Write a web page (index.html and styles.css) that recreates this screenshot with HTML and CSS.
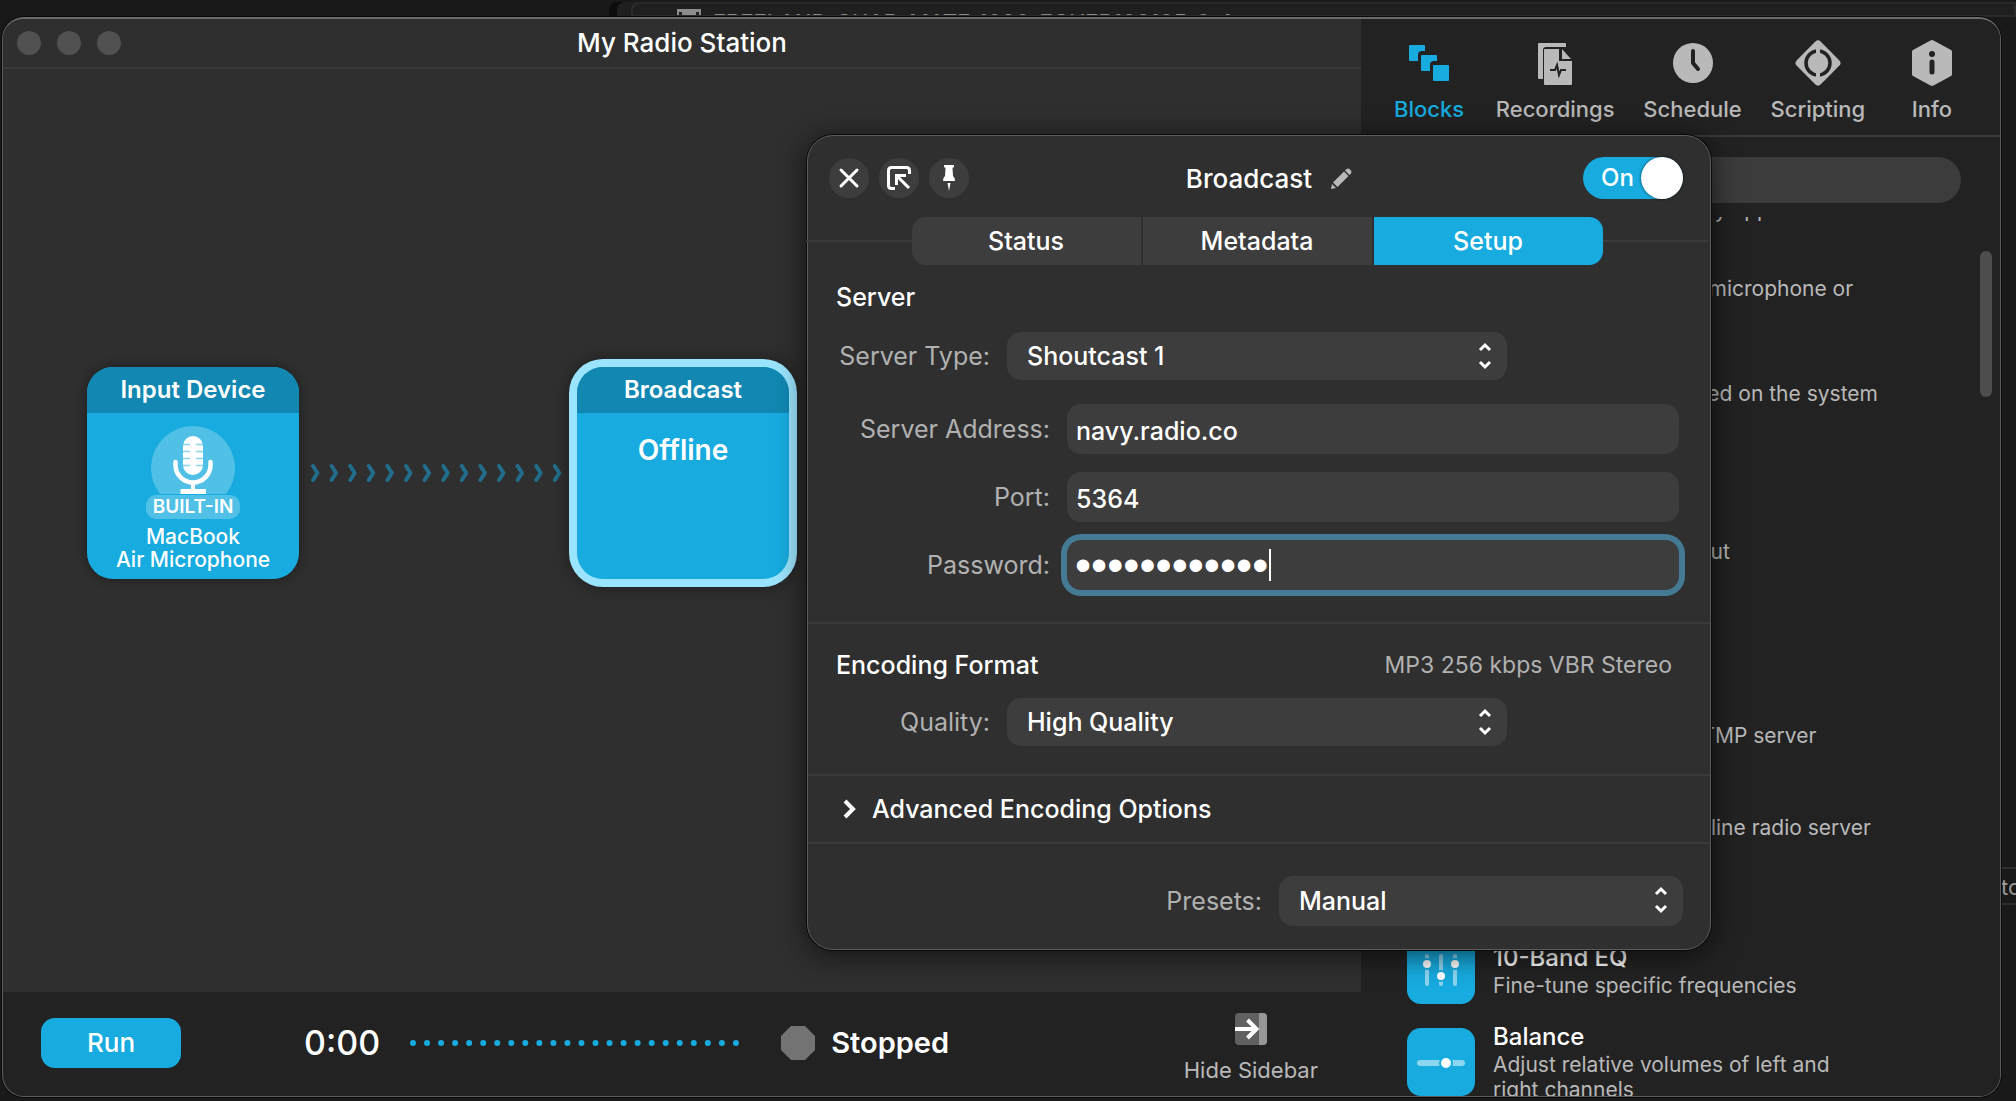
FILE: index.html
```html
<!DOCTYPE html>
<html lang="en">
<head>
<meta charset="UTF-8">
<meta name="viewport" content="width=device-width, initial-scale=1.0">
<title>My Radio Station</title>
<link rel="stylesheet" href="styles.css">
</head>
<body>

<!-- windows behind the app -->
<div class="behind-top">
    <svg width="24" height="14" viewBox="0 0 24 14"><path fill="#8c8c8c" d="M0 0h24v14H0z"/><path fill="#222" d="M2 3h3v3H2zM19 3h3v3h-3zM2 9h3v3H2zM19 9h3v3h-3z"/></svg>
    <span>FREELAND_CHAR_MATE_1080_ECHER109105_0_4</span>
</div>
<div class="behind-right">to</div>

<div class="window">
    <main class="main">
        <header class="titlebar">
            <div class="lights"><i></i><i></i><i></i></div>
            <h1>My Radio Station</h1>
        </header>

        <div class="canvas">
            <div class="block block-input">
                <h2>Input Device</h2>
                <svg class="mic" width="84" height="70" viewBox="0 0 84 70">
                    <path fill="#fff" fill-opacity=".25" d="M9 68a42 42 0 1 1 66 0z"/>
                    <rect x="32" y="10" width="20" height="39" rx="10" fill="#fff"/>
                    <path stroke="#17abdf" stroke-opacity=".5" stroke-width="1.5" d="M32 18.5h7M45 18.5h7M32 25.5h7M45 25.5h7M32 32.5h7M45 32.5h7M32 39.5h7M45 39.5h7"/>
                    <path fill="none" stroke="#fff" stroke-width="4.5" stroke-linecap="round" d="M24.5 36v3a17.500 17.500 0 0 0 35 0v-3"/>
                    <path fill="#fff" d="M40 57h4v6h10q1 0 1 1v4H29.500v-4q0-1 1-1H40z"/>
                </svg>
                <span class="badge">BUILT-IN</span>
                <p>MacBook<br>Air Microphone</p>
            </div>
            <svg class="wire" width="254" height="20" viewBox="0 0 254 20">
                <defs><path id="chev" d="M3 3 7.500 10 3 17" fill="none" stroke="#216d8b" stroke-width="4" stroke-linecap="round" stroke-linejoin="round"/></defs>
                <use href="#chev"/><use href="#chev" x="18.600"/><use href="#chev" x="37.200"/><use href="#chev" x="55.800"/><use href="#chev" x="74.400"/><use href="#chev" x="93"/><use href="#chev" x="111.600"/><use href="#chev" x="130.200"/><use href="#chev" x="148.800"/><use href="#chev" x="167.400"/><use href="#chev" x="186"/><use href="#chev" x="204.600"/><use href="#chev" x="223.200"/><use href="#chev" x="241.800"/>
            </svg>
            <div class="block block-broadcast">
                <h2>Broadcast</h2>
                <strong>Offline</strong>
            </div>
        </div>

        <footer class="transport">
            <button class="run">Run</button>
            <time>0:00</time>
            <svg class="dots" width="330" height="8" viewBox="0 0 330 8"><path d="M3 4h324" stroke="#17abdf" stroke-width="6" stroke-linecap="round" stroke-dasharray="0 14.040"/></svg>
            <svg class="octagon" width="34" height="34" viewBox="0 0 34 34"><path fill="#737373" d="M10 0h14l10 10v14L24 34H10L0 24V10z"/></svg>
            <span class="state">Stopped</span>
            <button class="hide-sidebar">
                <svg width="32" height="32" viewBox="0 0 32 32">
                    <rect width="32" height="32" rx="4" fill="#606060"/>
                    <path fill="#979797" d="M24 0h4q4 0 4 4v24q0 4-4 4h-4z"/>
                    <path fill="none" stroke="#fff" stroke-width="4" d="M0 16h22M12.500 7l9 9-9 9"/>
                </svg>
                Hide Sidebar
            </button>
        </footer>
    </main>

    <aside class="sidebar">
        <nav class="sections">
            <button class="active">
                <svg width="46" height="46" viewBox="0 0 46 46" fill="currentColor">
                    <path d="M4 5h14q1 0 1 1v5h-3q-4 0-4 4v6H4q-1 0-1-1V6q0-1 1-1z"/>
                    <path d="M16 15h14q1 0 1 1v5h-3q-4 0-4 4v6h-8q-1 0-1-1V16q0-1 1-1z"/>
                    <rect x="27" y="25" width="16" height="16" rx="1"/>
                </svg>
                Blocks
            </button>
            <button>
                <svg width="46" height="46" viewBox="0 0 46 46" fill="currentColor">
                    <path d="M7 3h26q1 0 1 1v3H14q-3 0-3 3v29H7q-1 0-1-1V4q0-1 1-1z"/>
                    <path d="M13 9h14v12h13v23q0 1-1 1H13q-1 0-1-1V10q0-1 1-1z"/>
                    <path d="M30 9l9 10h-9z"/>
                    <path fill="none" stroke="#222" stroke-width="2" d="M18 30h5l2-5 2 10 2-5h5"/>
                </svg>
                Recordings
            </button>
            <button>
                <svg width="46" height="46" viewBox="0 0 46 46" fill="currentColor">
                    <circle cx="23" cy="23" r="20"/>
                    <path fill="none" stroke="#222" stroke-width="4" stroke-linecap="round" stroke-linejoin="round" d="M23 11v12l5 6"/>
                </svg>
                Schedule
            </button>
            <button>
                <svg width="46" height="46" viewBox="0 0 46 46" fill="currentColor">
                    <rect x="6" y="6" width="34" height="34" rx="4" transform="rotate(45 23 23)"/>
                    <circle cx="23" cy="23" r="12" fill="none" stroke="#222" stroke-width="3.500"/>
                    <path stroke="currentColor" stroke-width="4" d="M23 7v10M23 29v10"/>
                </svg>
                Scripting
            </button>
            <button>
                <svg width="46" height="46" viewBox="0 0 46 46" fill="currentColor">
                    <path d="M21.500.5q1.500-.8 3 0L42 10q1 .6 1 2v22q0 1.400-1 2L24.500 45.500q-1.500.8-3 0L4 36q-1-.6-1-2V12q0-1.400 1-2z"/>
                    <circle cx="23" cy="14" r="3" fill="#222"/>
                    <path stroke="#222" stroke-width="5" stroke-linecap="round" d="M23 22v10"/>
                </svg>
                Info
            </button>
        </nav>

        <input class="search" type="search" aria-label="Search blocks">

        <div class="library">
            <ul>
                <li><span class="tile"></span><div><b>Application</b><p>Capture audio from any application</p></div></li>
                <li><span class="tile"></span><div><b>Input Device</b><p>Capture audio from a microphone or<br>other input</p></div></li>
                <li><span class="tile"></span><div><b>System Audio</b><p>Capture all audio played on the system</p></div></li>
            </ul>
            <h3>Outputs</h3>
            <ul>
                <li><span class="tile"></span><div><b>Output Device</b><p>Send audio to an output</p></div></li>
                <li><span class="tile"></span><div><b>Recorder</b><p>Save audio to a file</p></div></li>
                <li><span class="tile"></span><div><b>Live Stream</b><p>Stream to a remote RTMP server</p></div></li>
                <li><span class="tile"></span><div><b>Broadcast</b><p>Send audio to your online radio server</p></div></li>
            </ul>
            <h3>Effects</h3>
            <ul>
                <li>
                    <span class="tile">
                        <svg width="68" height="68" viewBox="0 0 68 68">
                            <path stroke="#8dd6f0" stroke-width="4" stroke-linecap="round" d="M20 20v28M34 20v28M48 20v28"/>
                            <g fill="#fff" stroke="#17abdf" stroke-width="2"><circle cx="20" cy="28" r="5"/><circle cx="34" cy="40" r="5"/><circle cx="48" cy="28" r="5"/></g>
                        </svg>
                    </span>
                    <div><b>10-Band EQ</b><p>Fine-tune specific frequencies</p></div>
                </li>
                <li>
                    <span class="tile">
                        <svg width="68" height="68" viewBox="0 0 68 68">
                            <path stroke="#8dd6f0" stroke-width="6" stroke-linecap="round" d="M13 35h42"/>
                            <circle cx="39" cy="35" r="6" fill="#fff" stroke="#17abdf" stroke-width="2"/>
                        </svg>
                    </span>
                    <div><b>Balance</b><p>Adjust relative volumes of left and<br>right channels</p></div>
                </li>
            </ul>
        </div>
        <i class="scrollbar"></i>
    </aside>
</div>

<form class="popover">
    <header>
        <button type="button" class="round" aria-label="Close">
            <svg width="40" height="40" viewBox="0 0 40 40" fill="none" stroke="#fff" stroke-width="3" stroke-linecap="round"><path d="M12 12l16 16M28 12 12 28"/></svg>
        </button>
        <button type="button" class="round" aria-label="Detach">
            <svg width="40" height="40" viewBox="0 0 40 40" fill="none" stroke="#fff" stroke-width="3"><path d="M16 30.500h-3.500q-3 0-3-3v-15q0-3 3-3h15q3 0 3 3V16"/><path d="M17.500 27V17.500H27M18 18l12 12"/></svg>
        </button>
        <button type="button" class="round" aria-label="Pin">
            <svg width="40" height="40" viewBox="0 0 40 40" fill="#fff"><path d="M15 7h10v2l-1.500 1 .5 8q2 1.500 2 5H14q0-3.500 2-5l.5-8L15 9zM18.500 25h3L20 33z"/></svg>
        </button>
        <h2>
            Broadcast
            <svg width="22" height="22" viewBox="0 0 22 22" fill="#b9b9b9"><path d="M1 21l1-5 4 4zM3 14.500 14 3.500l4.500 4.500-11 11zM15 2.500l1.500-1.500q1.500-1 3 0l1.500 1.500q1 1.500 0 3L19.500 7z"/></svg>
        </h2>
        <label class="toggle"><input type="checkbox" checked><span>On</span></label>
    </header>

    <div class="tabs">
        <button type="button">Status</button>
        <button type="button">Metadata</button>
        <button type="button" class="active">Setup</button>
    </div>

    <section class="server">
        <h3>Server</h3>
        <div class="row">
            <label for="type">Server Type:</label>
            <div class="select">
                <select id="type"><option>Shoutcast 1</option><option>Shoutcast 2</option><option>Icecast 2</option></select>
                <svg width="14" height="28" viewBox="0 0 14 28"><path d="M2 8l5-5 5 5M2 20l5 5 5-5"/></svg>
            </div>
        </div>
        <div class="row wide">
            <label for="address">Server Address:</label>
            <input id="address" type="text" value="navy.radio.co">
        </div>
        <div class="row wide">
            <label for="port">Port:</label>
            <input id="port" type="text" value="5364">
        </div>
        <div class="row wide focused">
            <label for="password">Password:</label>
            <input id="password" type="password" value="broadcasting">
            <i class="caret"></i>
        </div>
    </section>

    <section class="encoding">
        <div class="heading">
            <h3>Encoding Format</h3>
            <span>MP3 256 kbps VBR Stereo</span>
        </div>
        <div class="row">
            <label for="quality">Quality:</label>
            <div class="select">
                <select id="quality"><option>High Quality</option><option>Medium Quality</option><option>Low Quality</option></select>
                <svg width="14" height="28" viewBox="0 0 14 28"><path d="M2 8l5-5 5 5M2 20l5 5 5-5"/></svg>
            </div>
        </div>
    </section>

    <details>
        <summary>
            <svg width="13" height="20" viewBox="0 0 13 20"><path d="M2 2l8 8-8 8" fill="none" stroke="#fff" stroke-width="4"/></svg>
            Advanced Encoding Options
        </summary>
    </details>

    <footer>
        <label for="presets">Presets:</label>
        <div class="select">
            <select id="presets"><option>Manual</option></select>
            <svg width="14" height="28" viewBox="0 0 14 28"><path d="M2 8l5-5 5 5M2 20l5 5 5-5"/></svg>
        </div>
    </footer>
</form>

</body>
</html>
```
FILE: styles.css
```css
* {
    box-sizing: border-box;
}
body {
    margin: 0;
    height: 100vh;
    padding: 17px 15px 4px 2px;
    overflow: hidden;
    background: #191919;
    color: #fff;
    font-family: Inter, "Liberation Sans", sans-serif;
    font-size: 26px;
    line-height: 30px;
    font-weight: 500;
}
h1, h2, h3, p, ul {
    margin: 0;
    padding: 0;
    font-size: inherit;
    font-weight: inherit;
}
button, input, select {
    font: inherit;
    color: inherit;
    border: none;
    outline: none;
}
button {
    padding: 0;
    background: none;
    cursor: pointer;
}
svg {
    display: block;
    flex: none;
}

/* other windows peeking out */
.behind-top {
    position: absolute;
    top: 2px;
    left: 631px;
    right: 0;
    height: 15px;
    padding: 5px 0 0 44px;
    display: flex;
    gap: 12px;
    overflow: hidden;
    background: #1f1f1f;
    border: 2px solid #2a2a2a;
    border-radius: 8px 0 0 0;
    box-shadow: -14px 0 #1f1f1f, -22px 0 #0c0c0c;
    color: #888;
    font-size: 22px;
    line-height: 26px;
}
.behind-right {
    position: absolute;
    left: 2001px;
    right: 0;
    top: 867px;
    height: 38px;
    overflow: hidden;
    border: solid #2e2e2e;
    border-width: 2px 0;
    color: #999;
    font-size: 22px;
    font-weight: 400;
    line-height: 36px;
}

/* app window */
.window {
    position: relative;
    display: grid;
    grid-template-columns: 1fr 639px;
    height: 100%;
    overflow: hidden;
    border: 1px solid #5c5c5c;
    border-top: 2px solid #6a6a6a;
    border-radius: 22px;
    background: #222;
    box-shadow: 0 0 0 1px #0a0a0a;
}
.main {
    display: flex;
    flex-direction: column;
    min-width: 0;
}
.titlebar {
    display: grid;
    grid-template-columns: 1fr auto 1fr;
    align-items: center;
    height: 50px;
    padding: 0 14px;
    background: #2f2f2f;
    border-bottom: 2px solid #3b3b3b;
}
.lights {
    display: flex;
    gap: 16px;
}
.lights i {
    width: 24px;
    height: 24px;
    border-radius: 50%;
    background: #515151;
}
.canvas {
    position: relative;
    flex: 1;
    background: #2f2f2f;
}

/* blocks are placed freely on the canvas */
.block {
    position: absolute;
    top: 298px;
    width: 212px;
    height: 212px;
    border-radius: 26px;
    overflow: hidden;
    display: flex;
    flex-direction: column;
    align-items: center;
    background: #17abdf;
    box-shadow: 0 0 12px #0006;
}
.block h2 {
    align-self: stretch;
    background: #1187b1;
    text-align: center;
    font-size: 24px;
    line-height: 46px;
    font-weight: 600;
}
.block-input {
    left: 84px;
}
.block-broadcast {
    left: 574px;
    box-shadow: 0 0 0 8px #9be4fe, 0 0 16px 8px #0006;
}
.block strong {
    margin-top: 20px;
    font-size: 28px;
    line-height: 34px;
    font-weight: 600;
}
.block p {
    margin-top: 6px;
    text-align: center;
    font-size: 21px;
    line-height: 23px;
}
.mic {
    margin-top: 13px;
}
.badge {
    margin-top: -1px;
    padding: 0 7px;
    border-radius: 10px;
    background: #51c0e7;
    font-size: 19px;
    line-height: 24px;
    font-weight: 600;
}
.wire {
    position: absolute;
    left: 307px;
    top: 394px;
}

.transport {
    display: flex;
    align-items: center;
    height: 104px;
    padding: 0 43px 2px 38px;
}
.run {
    width: 140px;
    height: 50px;
    border-radius: 14px;
    background: #17abdf;
}
.transport time {
    margin-left: 123px;
    font-size: 34px;
}
.dots {
    margin-left: 30px;
}
.octagon {
    margin: 0 16px 0 41px;
}
.state {
    font-size: 29px;
    font-weight: 600;
}
.hide-sidebar {
    margin-left: auto;
    padding-top: 11px;
    display: flex;
    flex-direction: column;
    align-items: center;
    gap: 11px;
    color: #b9b9b9;
    font-size: 22px;
    font-weight: 400;
    line-height: 28px;
}

/* sidebar */
.sidebar {
    position: relative;
    display: flex;
    flex-direction: column;
    min-height: 0;
    background: #222;
}
.sections {
    display: flex;
    justify-content: space-between;
    height: 118px;
    padding: 21px 30px 0;
    border-bottom: 2px solid #3b3b3b;
}
.sections button {
    display: flex;
    flex-direction: column;
    align-items: center;
    gap: 10px;
    min-width: 76px;
    color: #b9b9b9;
    font-size: 22px;
    line-height: 26px;
}
.sections .active {
    color: #17abdf;
}
.search {
    flex: none;
    height: 46px;
    margin: 20px 39px 14px 46px;
    padding: 0 20px;
    border-radius: 23px;
    background: #3c3c3c;
}
.library {
    flex: 1;
    min-height: 0;
    overflow: hidden;
    padding: 0 46px;
}
.library ul {
    list-style: none;
}
.library ul:first-child {
    margin-top: -69px;
}
.library h3 {
    padding: 24px 0 12px;
}
.library li {
    display: flex;
    align-items: center;
    gap: 18px;
    height: 92px;
}
.library b {
    display: block;
    font-size: 24px;
    font-weight: 500;
    line-height: 30px;
}
.library p {
    color: #b9b9b9;
    font-size: 21px;
    font-weight: 400;
    line-height: 25px;
    white-space: nowrap;
}
.tile {
    flex: none;
    width: 68px;
    height: 68px;
    border-radius: 14px;
    background: #17abdf;
}
.scrollbar {
    position: absolute;
    top: 232px;
    right: 8px;
    width: 12px;
    height: 146px;
    border-radius: 6px;
    background: #4d4d4d;
}

/* block settings popover */
.popover {
    position: absolute;
    left: 807px;
    top: 135px;
    width: 904px;
    border: 1px solid #5c5c5c;
    border-radius: 26px;
    background: #2f2f2f;
    box-shadow: 0 0 0 1px #0a0a0a, 0 4px 30px #000a;
    font-size: 25px;
}
.popover header {
    display: flex;
    align-items: center;
    gap: 10px;
    padding: 21px 27px 0 21px;
}
.round {
    width: 40px;
    height: 40px;
    border-radius: 50%;
    background: #3d3d3d;
}
.popover h2 {
    flex: 1;
    display: flex;
    align-items: center;
    justify-content: center;
    gap: 18px;
    padding: 2px 14px 0 0;
    font-size: 26px;
}
.toggle {
    display: flex;
    align-items: center;
    justify-content: space-between;
    flex-direction: row-reverse;
    width: 100px;
    height: 42px;
    padding-left: 18px;
    border-radius: 21px;
    background: #17abdf;
    font-size: 24px;
}
.toggle input {
    appearance: none;
    margin: 0;
    width: 42px;
    height: 42px;
    border-radius: 50%;
    background: #fff;
    box-shadow: 0 0 3px #000a;
}
.tabs {
    display: flex;
    align-items: center;
    gap: 2px;
    padding: 18px 4px 0 0;
}
.tabs::before, .tabs::after {
    content: "";
    flex: 1;
    height: 2px;
    margin: 0 -2px;
    background: #3b3b3b;
}
.tabs button {
    width: 229px;
    height: 48px;
    background: #3d3d3d;
}
.tabs button:first-child {
    border-radius: 14px 0 0 14px;
}
.tabs button:last-child {
    border-radius: 0 14px 14px 0;
}
.tabs .active {
    background: #17abdf;
}
.popover section {
    padding: 0 31px 0 28px;
    border-bottom: 2px solid #3b3b3b;
}
.popover .server {
    padding-top: 17px;
    padding-bottom: 32px;
}
.popover .encoding {
    padding-top: 26px;
    padding-bottom: 28px;
}
.row {
    position: relative;
    display: flex;
    align-items: center;
    gap: 17px;
    margin-top: 18px;
}
h3 + .row {
    margin-top: 20px;
}
.row:not(.wide) + .wide {
    margin-top: 24px;
}
.popover label:not(.toggle) {
    color: #b1b1b1;
    font-weight: 400;
    white-space: nowrap;
}
.row label {
    flex: none;
    width: 154px;
    text-align: right;
}
.wide label {
    width: 214px;
}
.row .select {
    width: 500px;
}
.row input {
    flex: 1;
    min-width: 0;
    height: 50px;
    padding: 4px 9px 0;
    border-radius: 14px;
    background: #3d3d3d;
}
.row.focused input {
    padding: 0 8px;
    font-family: "Liberation Sans", sans-serif;
    font-size: 46px;
    box-shadow: 0 0 0 6px #447a93;
}
.caret {
    position: absolute;
    left: 433px;
    width: 2px;
    height: 32px;
    background: #fff;
}
.select {
    position: relative;
}
.select select {
    appearance: none;
    display: block;
    width: 100%;
    height: 48px;
    padding: 0 20px;
    border-radius: 14px;
    background: #3d3d3d;
}
.select svg {
    position: absolute;
    right: 15px;
    top: 10px;
    fill: none;
    stroke: #fff;
    stroke-width: 3;
    pointer-events: none;
}
.heading {
    display: flex;
    justify-content: space-between;
    padding-right: 7px;
}
.heading span {
    color: #b1b1b1;
    font-size: 23px;
    font-weight: 400;
}
details {
    border-bottom: 2px solid #3b3b3b;
}
summary {
    display: flex;
    align-items: center;
    gap: 16px;
    height: 66px;
    padding-left: 35px;
    list-style: none;
    cursor: pointer;
}
.popover footer {
    display: flex;
    align-items: center;
    justify-content: flex-end;
    gap: 17px;
    padding: 32px 27px 23px;
}
.popover footer .select {
    width: 404px;
}
.popover footer select {
    height: 50px;
}
```
